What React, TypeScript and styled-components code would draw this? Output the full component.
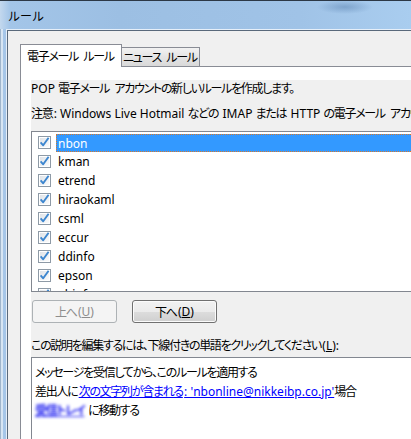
import React from "react";
import styled, { createGlobalStyle, css } from "styled-components";

const Global = createGlobalStyle`
  html, body { margin: 0; padding: 0; background: #fff; }
  #root { width: 411px; height: 439px; }
`;

const Window = styled.div`
  width: 411px;
  height: 439px;
  overflow: hidden;
  display: flex;
  flex-direction: column;
  background: #a4c6ea;
  font-family: "Noto Sans", "Noto Sans CJK JP", sans-serif;
  font-size: 12px;
  color: #000;
  font-feature-settings: "palt" 1;
`;

/* Japanese runs: Meiryo UI is narrower than Noto Sans CJK */
const Jp = styled.span`
  letter-spacing: -1.3px;
  margin-right: 1.3px;
`;

/* a space that separates two Japanese words */
const Sp = styled.span`
  display: inline-block;
  width: 4px;
`;

const CJK = /([\u3000-\u30ff\u4e00-\u9fff\uff00-\uffef]+)/;

function jp(text: string): React.ReactNode[] {
  const parts = text.split(CJK).filter((s) => s.length > 0);
  return parts.map((s, i) => {
    if (CJK.test(s)) return <Jp key={i}>{s}</Jp>;
    if (s === " " && i > 0 && i < parts.length - 1 && CJK.test(parts[i - 1]) && CJK.test(parts[i + 1]))
      return <Sp key={i} />;
    return <React.Fragment key={i}>{s}</React.Fragment>;
  });
}

const TitleBar = styled.div`
  flex: none;
  height: 27px;
  border-top: 1px solid #2c3846;
  background:
    radial-gradient(ellipse 28px 7px at 345px 6px, rgba(95, 135, 180, 0.55), rgba(95, 135, 180, 0)),
    linear-gradient(to right, #c3d8ee 0, #a3c5e8 10px, #9cbfe3 120px, #a0c3e7 300px, #a9cdef 411px);
  display: flex;
  align-items: center;
  padding: 1px 0 0 8px;
  font-size: 12px;
  font-feature-settings: normal;
  font-family: "Noto Sans CJK JP", sans-serif;
`;

const Body = styled.div`
  flex: 1;
  display: flex;
  min-height: 0;
`;

const Frame = styled.div`
  flex: none;
  width: 6px;
  background: linear-gradient(
    to right,
    #9fb5cc 0 1px,
    #d7e5f3 1px 3px,
    #a6c6e8 3px 6px
  );
`;

const ClientOuter = styled.div`
  flex: 1;
  display: flex;
  min-width: 0;
  border-top: 1px solid #e6eff9;
  border-left: 1px solid #e6eff9;
`;

const Client = styled.div`
  flex: 1;
  min-width: 0;
  display: flex;
  flex-direction: column;
  border-top: 1px solid #59697b;
  border-left: 1px solid #59697b;
  background: #f0f0f0;
  padding: 13px 0 0 12px;
`;

const TabStrip = styled.div`
  flex: none;
  height: 22px;
  display: flex;
  align-items: flex-start;
  position: relative;
  z-index: 1;
`;

const Tab = styled.div<{ $active?: boolean; $w: number }>`
  box-sizing: border-box;
  width: ${(p) => p.$w}px;
  border: 1px solid #898c95;
  border-bottom: none;
  display: flex;
  align-items: center;
  justify-content: center;
  white-space: nowrap;
  ${(p) =>
    p.$active
      ? css`
          height: 23px;
          background: #fff;
          position: relative;
          z-index: 2;
          padding-bottom: 1px;
        `
      : css`
          height: 19px;
          margin-top: 3px;
          margin-left: -1px;
          background: linear-gradient(#f2f2f2, #e4e4e4 50%, #d9d9d9);
        `}
`;

const Panel = styled.div`
  flex: 1;
  min-height: 0;
  display: flex;
  border-top: 1px solid #898c95;
  border-left: 1px solid #898c95;
  background: #fff;
  padding: 13px 0 0 10px;
`;

const Page = styled.div`
  flex: 1;
  min-width: 0;
  display: flex;
  flex-direction: column;
  background: #f0f0f0;
`;

const TextLine = styled.div<{ $mt: number }>`
  flex: none;
  line-height: 16px;
  height: 16px;
  margin-top: ${(p) => p.$mt}px;
  white-space: nowrap;
`;

const ListBox = styled.div`
  flex: none;
  box-sizing: border-box;
  height: 161px;
  margin-top: 9px;
  border: 1px solid #828790;
  border-right: none;
  background: #fff;
  padding: 1px 0 0 6px;
  overflow: hidden;
`;

const Row = styled.div`
  height: 19px;
  display: flex;
  align-items: center;
`;

const ItemLabel = styled.span<{ $selected?: boolean }>`
  margin-left: 5px;
  padding-left: 2px;
  height: 18px;
  line-height: 17px;
  align-self: flex-end;
  box-sizing: border-box;
  white-space: nowrap;
  ${(p) =>
    p.$selected &&
    css`
      flex: 1;
      background: #3399ff;
      color: #fff;
      border: 1px dotted #d8782a;
      border-right: none;
      padding-left: 1px;
    `}
`;

const ButtonRow = styled.div`
  flex: none;
  display: flex;
  gap: 15px;
  margin: 8px 0 0 1px;
`;

const Button = styled.button<{ $off?: boolean }>`
  box-sizing: border-box;
  width: 85px;
  height: 23px;
  padding: 0;
  border-radius: 3px;
  font: inherit;
  font-feature-settings: "palt" 1;
  display: flex;
  align-items: center;
  justify-content: center;
  ${(p) =>
    p.$off
      ? css`
          border: 1px solid #adb2b5;
          background: #f4f4f4;
          color: #8d8d8d;
        `
      : css`
          border: 1px solid #707070;
          background: linear-gradient(#f2f2f2 0%, #ebebeb 50%, #dddddd 50%, #cfcfcf 100%);
          box-shadow: inset 0 0 0 1px #fbfbfb;
          color: #000;
        `}
`;

const DescBox = styled.div`
  flex: 1;
  margin-top: 3px;
  border-top: 1px solid #828790;
  border-left: 1px solid #828790;
  background: #fff;
  padding: 5px 0 0 3px;
  line-height: 19px;
  white-space: nowrap;
`;

const Link = styled.span<{ $blur?: boolean }>`
  color: #0000ff;
  text-decoration: underline;
  ${(p) =>
    p.$blur &&
    css`
      display: inline-block;
      width: 53px;
      color: #2020f0;
      filter: blur(1.4px);
      font-weight: bold;
    `}
`;

const Check: React.FC = () => (
  <svg width="13" height="13" viewBox="0 0 13 13" style={{ flex: "none" }}>
    <defs>
      <linearGradient id="cbg" x1="0" y1="0" x2="1" y2="1">
        <stop offset="0" stopColor="#dfe3e8" />
        <stop offset="1" stopColor="#fbfbfb" />
      </linearGradient>
    </defs>
    <rect x="0.5" y="0.5" width="12" height="12" fill="#fff" stroke="#8e9aa6" />
    <rect x="2" y="2" width="9" height="9" fill="url(#cbg)" />
    <path d="M2.6 6.4 L5.2 9.3 L10.6 1.8" stroke="#3d86cf" strokeWidth="1.9" fill="none" strokeLinejoin="round" />
  </svg>
);

const rules = ["nbon", "kman", "etrend", "hiraokaml", "csml", "eccur", "ddinfo", "epson", "ehinfo"];

export default function App() {
  return (
    <>
      <Global />
      <Window>
        <TitleBar>ルール</TitleBar>
        <Body>
          <Frame />
          <ClientOuter>
            <Client>
              <TabStrip>
                <Tab $active $w={102}>{jp("電子メール ルール")}</Tab>
                <Tab $w={79}>{jp("ニュース ルール")}</Tab>
              </TabStrip>
              <Panel>
                <Page>
                  <TextLine $mt={1}>{jp("POP 電子メール アカウントの新しいルールを作成します。")}</TextLine>
                  <TextLine $mt={9}>
                    {jp("注意: Windows Live Hotmail などの IMAP または HTTP の電子メール アカウントにはルールを適用できません。")}
                  </TextLine>
                  <ListBox>
                    {rules.map((r, i) => (
                      <Row key={r}>
                        <Check />
                        <ItemLabel $selected={i === 0}>{r}</ItemLabel>
                      </Row>
                    ))}
                  </ListBox>
                  <ButtonRow>
                    <Button $off disabled>
                      {jp("上へ")}(<u>U</u>)
                    </Button>
                    <Button>
                      {jp("下へ")}(<u>D</u>)
                    </Button>
                  </ButtonRow>
                  <TextLine $mt={15}>
                    {jp("この説明を編集するには、下線付きの単語をクリックしてください")}(<u>L</u>):
                  </TextLine>
                  <DescBox>
                    <div>{jp("メッセージを受信してから、このルールを適用する")}</div>
                    <div>
                      {jp("差出人に")}
                      <Link>{jp("次の文字列が含まれる: 'nbonline@nikkeibp.co.jp'")}</Link>
                      {jp("場合")}
                    </div>
                    <div>
                      <Link $blur>{jp("受信トレイ")}</Link>
                      {jp("に移動する")}
                    </div>
                  </DescBox>
                </Page>
              </Panel>
            </Client>
          </ClientOuter>
        </Body>
      </Window>
    </>
  );
}
